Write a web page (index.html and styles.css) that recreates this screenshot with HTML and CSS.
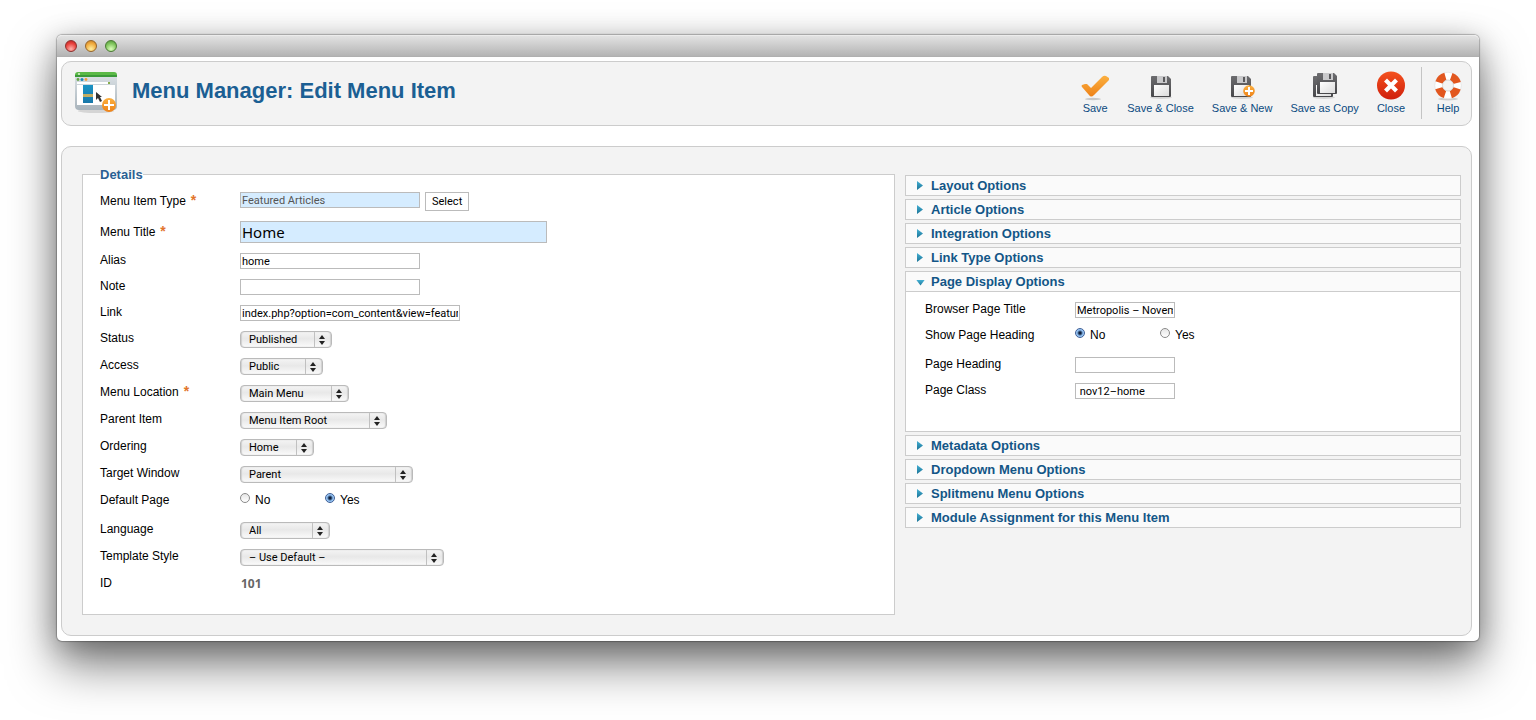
FILE: index.html
```html
<!DOCTYPE html>
<html lang="en">
<head>
<meta charset="utf-8">
<title>Menu Manager: Edit Menu Item</title>
<link rel="stylesheet" href="styles.css">
</head>
<body>
<svg class="defs" width="0" height="0" aria-hidden="true">
  <defs>
    <linearGradient id="orange" x1="0" y1="0" x2="0" y2="1"><stop offset="0" stop-color="#fbb040"/><stop offset="1" stop-color="#ee8218"/></linearGradient>
    <linearGradient id="dark" x1="0" y1="0" x2="0" y2="1"><stop offset="0" stop-color="#6c6c6f"/><stop offset="1" stop-color="#47474a"/></linearGradient>
    <linearGradient id="paper" x1="0" y1="0" x2="1" y2="1"><stop offset="0" stop-color="#ffffff"/><stop offset="1" stop-color="#dcdcdc"/></linearGradient>
    <linearGradient id="red" x1="0" y1="0" x2="0" y2="1"><stop offset="0" stop-color="#f4511e"/><stop offset="1" stop-color="#cf1f0c"/></linearGradient>
    <linearGradient id="blue" x1="0" y1="0" x2="0" y2="1"><stop offset="0" stop-color="#1b93c4"/><stop offset="1" stop-color="#1878aa"/></linearGradient>
    <linearGradient id="frame" x1="0" y1="0" x2="0" y2="1"><stop offset="0" stop-color="#dde3e7"/><stop offset="1" stop-color="#a9b4bc"/></linearGradient>
    <g id="floppy">
      <path d="M1 0h16l3 3v17a1 1 0 0 1-1 1H1a1 1 0 0 1-1-1V1a1 1 0 0 1 1-1z" fill="url(#dark)"/>
      <path d="M6 0h10v7H6z" fill="#c9c9cb"/>
      <path d="M12 1h2v5h-2z" fill="#58585b"/>
      <path d="M3 9h15v11H3z" fill="url(#paper)"/>
    </g>
    <g id="plus">
      <circle r="5.8" fill="url(#orange)"/>
      <path d="M-1-4h2v3h3v2h-3v3h-2v-3h-3v-2h3z" fill="#fff"/>
    </g>
  </defs>
</svg>
<div class="window">
  <div class="titlebar">
    <span class="light light-red"></span><span class="light light-amber"></span><span class="light light-green"></span>
  </div>
  <div class="page">
    <header class="header">
      <svg class="logo" width="44" height="44" viewBox="0 0 44 44" aria-hidden="true">
        <ellipse cx="21" cy="39" rx="18" ry="2" fill="#000" opacity=".12"/>
        <rect x="0" y="1" width="42" height="37" rx="4" fill="url(#frame)"/>
        <path d="M3 0h36a3 3 0 0 1 3 3v2H0V3a3 3 0 0 1 3-3z" fill="#5bb947"/>
        <path d="M0 3h42v2H0z" fill="#3b9a39"/>
        <circle cx="4" cy="2" r="1.1" fill="#d5efc6"/>
        <circle cx="3" cy="7.500" r="1.4" fill="#64a644"/><circle cx="7" cy="7.500" r="1.5" fill="#1d87b8"/><circle cx="11" cy="7.500" r="1.4" fill="#ef9d3a"/>
        <path d="M2 10h33v2H2z" fill="#fff"/><path d="M33 10h2v2h-2z" fill="#86ad4b"/>
        <path d="M2 13h38v20H2z" fill="#fff"/>
        <path d="M8 13h10v18H8z" fill="url(#blue)"/><path d="M8 22h10v3H8z" fill="#c2ad62"/>
        <path d="M21 20v8l2-2 2 4 2-1-2-4h2z" fill="#333"/>
        <circle cx="34" cy="33" r="7" fill="url(#orange)"/><path d="M33 28h2v4h4v2h-4v4h-2v-4h-4v-2h4z" fill="#fff"/>
      </svg>
      <h1 class="title">Menu Manager: Edit Menu Item</h1>
      <div class="toolbar">
        <button type="button" class="tool"><svg width="28" height="30" viewBox="0 0 28 30" aria-hidden="true"><ellipse cx="12" cy="28" rx="8" ry="1.2" fill="#000" opacity=".18"/><path d="M1 16q-1-1 0-2l3-1 2 0 4 4L21 6q2-2 4-1l3 2v2L13 24q-3 3-5 0z" fill="url(#orange)"/></svg>Save</button>
        <button type="button" class="tool"><svg width="28" height="30" viewBox="0 0 28 30" aria-hidden="true"><ellipse cx="14" cy="26.500" rx="11" ry="1.500" fill="#000" opacity=".12"/><use href="#floppy" x="4" y="5"/></svg>Save &amp; Close</button>
        <button type="button" class="tool"><svg width="28" height="30" viewBox="0 0 28 30" aria-hidden="true"><ellipse cx="14" cy="26.500" rx="11" ry="1.500" fill="#000" opacity=".12"/><use href="#floppy" x="3" y="5"/><use href="#plus" x="21" y="20"/></svg>Save &amp; New</button>
        <button type="button" class="tool"><svg width="28" height="30" viewBox="0 0 28 30" aria-hidden="true"><ellipse cx="13" cy="26.500" rx="11" ry="1.500" fill="#000" opacity=".12"/><use href="#floppy" x="2" y="5"/><use href="#floppy" x="6" y="2"/></svg>Save as Copy</button>
        <button type="button" class="tool"><svg width="28" height="30" viewBox="0 0 28 30" aria-hidden="true"><circle cx="14" cy="14.500" r="14" fill="url(#red)"/><path d="M10 10.500l8 8m0-8l-8 8" stroke="#fff" stroke-width="4.200" stroke-linecap="square"/></svg>Close</button>
        <span class="divider"></span>
        <button type="button" class="tool"><svg width="28" height="30" viewBox="0 0 28 30" aria-hidden="true"><ellipse cx="14" cy="28" rx="10" ry="1.500" fill="#000" opacity=".15"/><circle cx="14" cy="14.500" r="13.300" fill="#fff" stroke="#dedede" stroke-width=".6"/><circle cx="14" cy="14.500" r="9.300" fill="none" stroke="#e2571f" stroke-width="8" stroke-dasharray="8.8 5.808" stroke-dashoffset="-2.904"/><circle cx="14" cy="14.500" r="5.500" fill="#f3f3f3" stroke="#d8d8d8"/></svg>Help</button>
      </div>
    </header>

    <main class="content">
      <form class="columns">
        <fieldset class="details">
          <legend>Details</legend>
          <div class="row row-wide"><label for="type">Menu Item Type<b class="req">*</b></label><input id="type" class="box required" value="Featured Articles" readonly><button type="button" class="select-btn">Select</button></div>
          <div class="row row-title"><label for="mtitle">Menu Title<b class="req">*</b></label><input id="mtitle" class="box required big" value="Home"></div>
          <div class="row"><label for="alias">Alias</label><input id="alias" class="box" value="home"></div>
          <div class="row"><label for="note">Note</label><input id="note" class="box"></div>
          <div class="row"><label for="link">Link</label><input id="link" class="box link" value="index.php?option=com_content&amp;view=featured"></div>
          <div class="row row-sel"><label for="status">Status</label><select id="status" class="w-status"><option>Published</option></select></div>
          <div class="row row-sel"><label for="access">Access</label><select id="access" class="w-access"><option>Public</option></select></div>
          <div class="row row-sel"><label for="loc">Menu Location<b class="req">*</b></label><select id="loc" class="w-location"><option>Main Menu</option></select></div>
          <div class="row row-sel"><label for="parent">Parent Item</label><select id="parent" class="w-parent"><option>Menu Item Root</option></select></div>
          <div class="row row-sel"><label for="order">Ordering</label><select id="order" class="w-order"><option>Home</option></select></div>
          <div class="row row-sel"><label for="target">Target Window</label><select id="target" class="w-target"><option>Parent</option></select></div>
          <div class="row row-wide" role="radiogroup" aria-labelledby="dp"><span class="label" id="dp">Default Page</span><label class="radio"><input type="radio" name="dp">No</label><label class="radio"><input type="radio" name="dp" checked>Yes</label></div>
          <div class="row row-sel"><label for="lang">Language</label><select id="lang" class="w-lang"><option>All</option></select></div>
          <div class="row row-sel"><label for="style">Template Style</label><select id="style" class="w-style"><option>– Use Default –</option></select></div>
          <div class="row row-sel"><span class="label">ID</span><output class="idval">101</output></div>
        </fieldset>

        <div class="panels">
          <section class="panel"><h3><button type="button"><i class="arrow"></i>Layout Options</button></h3></section>
          <section class="panel"><h3><button type="button"><i class="arrow"></i>Article Options</button></h3></section>
          <section class="panel"><h3><button type="button"><i class="arrow"></i>Integration Options</button></h3></section>
          <section class="panel"><h3><button type="button"><i class="arrow"></i>Link Type Options</button></h3></section>
          <section class="panel"><h3><button type="button" aria-expanded="true"><i class="arrow open"></i>Page Display Options</button></h3>
            <div class="panel-body">
              <div class="row"><label for="bpt">Browser Page Title</label><input id="bpt" class="box short" value="Metropolis – November 2012"></div>
              <div class="row row-wide" role="radiogroup" aria-labelledby="sph"><span class="label" id="sph">Show Page Heading</span><label class="radio"><input type="radio" name="sph" checked>No</label><label class="radio"><input type="radio" name="sph">Yes</label></div>
              <div class="row"><label for="ph">Page Heading</label><input id="ph" class="box short"></div>
              <div class="row"><label for="pc">Page Class</label><input id="pc" class="box short" value=" nov12–home"></div>
            </div>
          </section>
          <section class="panel"><h3><button type="button"><i class="arrow"></i>Metadata Options</button></h3></section>
          <section class="panel"><h3><button type="button"><i class="arrow"></i>Dropdown Menu Options</button></h3></section>
          <section class="panel"><h3><button type="button"><i class="arrow"></i>Splitmenu Menu Options</button></h3></section>
          <section class="panel"><h3><button type="button"><i class="arrow"></i>Module Assignment for this Menu Item</button></h3></section>
        </div>
      </form>
    </main>
  </div>
</div>
</body>
</html>
```
FILE: styles.css
```css
* { box-sizing: border-box; }
body {
  margin: 0;
  padding: 35px 57px 79px;
  background: #fff;
  color: #000;
  font: 12px/16px "Liberation Sans", Arial, sans-serif;
}
.defs { position: absolute; }
button { font: inherit; color: inherit; margin: 0; cursor: pointer; }

.window {
  border-radius: 5px;
  background: #fff;
  box-shadow: 0 0 1px 1px rgba(0,0,0,.25), 0 6px 28px rgba(0,0,0,.25), 0 24px 48px rgba(0,0,0,.5);
}
.titlebar {
  display: flex;
  align-items: center;
  gap: 8px;
  height: 22px;
  padding: 0 8px;
  border-top: 1px solid #ececec;
  border-bottom: 1px solid #b0b0b0;
  border-radius: 5px 5px 0 0;
  background: linear-gradient(#e2e2e2, #b4b4b4);
}
.light { width: 12px; height: 12px; border-radius: 50%; border: 1px solid; }
.light-red { border-color: #8c2f2c; background: radial-gradient(circle at 50% 80%, #ffb3ac, #e8413c 60%, #b3201f); }
.light-amber { border-color: #96652a; background: radial-gradient(circle at 50% 80%, #fff0a0, #f0aa3e 60%, #c17a22); }
.light-green { border-color: #4a7a33; background: radial-gradient(circle at 50% 80%, #dcffbc, #7fc45c 60%, #4c9038); }

.page { padding: 4px 7px 5px 4px; }
.header {
  display: flex;
  align-items: flex-start;
  padding: 9px 9px 5px 13px;
  margin-bottom: 20px;
  border: 1px solid #ccc;
  border-radius: 10px;
  background: #f3f3f3;
}
.logo { flex: none; margin-top: 1px; }
.title {
  flex: 1;
  margin: 7px 0 0 13px;
  font-size: 22px;
  line-height: 26px;
  color: #1b5f93;
}
.toolbar { display: flex; gap: 18px; height: 49px; }
.tool {
  display: flex;
  flex-direction: column;
  align-items: center;
  min-width: 28px;
  padding: 0;
  border: 0;
  background: none;
  font-size: 11px;
  line-height: 14px;
  color: #0b4a80;
  white-space: nowrap;
}
.divider { width: 1px; height: 52px; margin: -4px -6px 0 -2px; background: #c4c4c4; }

.content {
  padding: 20px 10px 20px 20px;
  border: 1px solid #ccc;
  border-radius: 10px;
  background: #f3f3f3;
}
.columns { display: grid; grid-template-columns: 813fr 556fr; gap: 10px; }
.details {
  min-width: 0;
  margin: 0;
  padding: 10px 17px 11px;
  border: 1px solid #ccc;
  background: #fff;
}
.details legend { padding: 0; font-size: 13px; line-height: 15px; font-weight: bold; color: #2a5f93; }

.row { display: flex; align-items: flex-start; min-height: 26px; }
.row > label:first-child, .label { flex: none; width: 140px; line-height: 14px; }
.row-wide { min-height: 29px; }
.row-title { min-height: 32px; }
.row-title > label:first-child { padding-top: 4px; }
.row-wide > label:first-child { padding-top: 2px; }
.req { margin-left: 5px; font-size: 14px; line-height: 10px; color: #e2742c; }

.row-sel { min-height: 27px; }
.box, select, .select-btn { font-family: Roboto, "Open Sans", sans-serif; font-size: 11px; }
.box {
  width: 180px;
  height: 16px;
  padding: 0 1px;
  border: 1px solid #bbb;
  border-radius: 0;
  background: #fff;
  color: #000;
}
.box.required { background: #d5ecff; }
#type { color: #555; }
.box.big { width: 307px; height: 22px; font-family: "Noto Sans", sans-serif; font-size: 15px; }
.box.link { width: 220px; }
.box.short { width: 100px; }
.select-btn {
  height: 19px;
  margin-left: 5px;
  padding: 0 6px;
  border: 1px solid #bbb;
  background: #fff;
  line-height: 17px;
}
select {
  height: 17px;
  padding: 0 20px 0 8px;
  border: 1px solid #bababa;
  border-radius: 4px;
  appearance: none;
  color: #000;
  line-height: 15px;
  background:
    url("data:image/svg+xml,%3Csvg xmlns='http://www.w3.org/2000/svg' width='17' height='15'%3E%3Cpath d='M0 0h1v15H0z' fill='%23c0c0c0'/%3E%3Cpath d='M5 7l3-4 3 4zM5 9l3 4 3-4z' fill='%23222'/%3E%3C/svg%3E") right center no-repeat,
    linear-gradient(#f4f4f4, #e8e8e8 45%, #fafafa);
  box-shadow: inset 1px 0 1px #d0d0d0, inset -1px 0 1px #d0d0d0;
}
.w-status { width: 92px; }
.w-access { width: 83px; }
.w-location { width: 109px; }
.w-parent { width: 147px; }
.w-order { width: 74px; }
.w-target { width: 173px; }
.w-lang { width: 90px; }
.w-style { width: 204px; }

.radio { display: flex; gap: 5px; width: 85px; line-height: 14px; }
.radio input {
  appearance: none;
  width: 10px;
  height: 10px;
  margin: 0;
  border: 1px solid #8a8a8a;
  border-radius: 50%;
  background: linear-gradient(#e6e6e6, #fff);
}
.radio input:checked {
  border-color: #3f5f96;
  background: radial-gradient(circle, #0d1f3c 0 1px, #8dbdf0 3px, #c5e2ff);
}
.idval { padding-left: 1px; font-weight: bold; font-size: 12px; color: #666; font-family: "Noto Sans", sans-serif; }

.panels { display: flex; flex-direction: column; gap: 3px; padding-top: 8px; }
.panel { border: 1px solid #ccc; background: #fafafa; }
.panel h3 { margin: 0; font-size: 13px; line-height: 19px; }
.panel button {
  display: flex;
  align-items: center;
  width: 100%;
  padding: 0 0 0 11px;
  border: 0;
  background: none;
  font-weight: bold;
  color: #135687;
}
.arrow {
  width: 6px;
  height: 9px;
  margin-right: 8px;
  background: linear-gradient(#44b0d4, #1b7396);
  clip-path: polygon(0 0, 100% 50%, 0 100%);
}
.arrow.open { width: 9px; height: 6px; margin: 2px 6px 0 -1px; clip-path: polygon(0 0, 100% 0, 50% 100%); }
.panel-body { padding: 10px 19px 20px; border-top: 1px solid #ccc; background: #fff; min-height: 140px; }
.panel-body .row > label:first-child, .panel-body .label { width: 150px; }
```
